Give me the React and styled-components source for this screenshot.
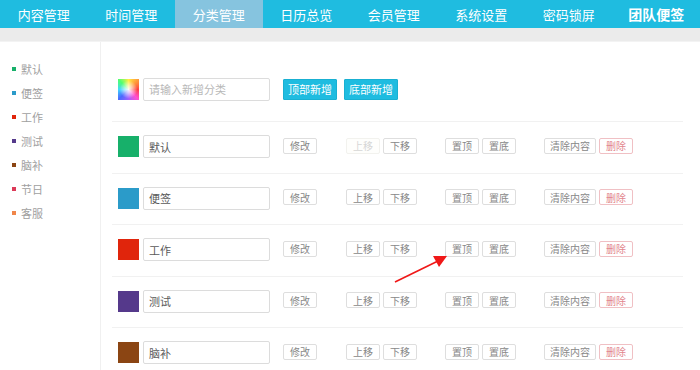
import React from "react";
import styled, { createGlobalStyle } from "styled-components";

const Global = createGlobalStyle`
  html, body { margin: 0; padding: 0; background: #fff; }
  body { font-family: "Noto Sans CJK SC", "Noto Sans", sans-serif; }
  * { box-sizing: border-box; }
`;

const Page = styled.div`
  position: relative;
  width: 700px;
  height: 370px;
  overflow: hidden;
`;

const Nav = styled.nav`
  display: flex;
  height: 28px;
  background: #1fbce0;
`;

const Tab = styled.div`
  width: 88px;
  display: flex;
  align-items: center;
  justify-content: center;
  color: #fff;
  font-size: ${(p) => (p.$bold ? "14px" : "13px")};
  font-weight: ${(p) => (p.$bold ? 700 : 400)};
  background: ${(p) => (p.$active ? "#86c4df" : "transparent")};
`;

const Band = styled.div`
  height: 14px;
  background: #ebebeb;
  border-bottom: 1px solid #f3f3f3;
`;

const Body = styled.div`
  display: flex;
`;

const Side = styled.ul`
  list-style: none;
  margin: 0;
  width: 101px;
  padding: 15px 0 0 0;
  min-height: 330px;
  border-right: 1px solid #f0f0f0;
`;

const SideItem = styled.li`
  display: flex;
  align-items: center;
  height: 24px;
  padding-left: 12px;
  font-size: 11px;
  color: #a0a0a0;
  &::before {
    content: "";
    width: 4px;
    height: 4px;
    margin-right: 5px;
    background: ${(p) => p.$color};
  }
`;

const Main = styled.div`
  flex: 1;
  padding: 20px 17px 0 11px;
`;

const AddRow = styled.div`
  display: flex;
  align-items: center;
  height: 60px;
  padding: 16px 0 21px 6px;
  border-bottom: 1px solid #f1f1f1;
`;

const Row = styled.div`
  display: flex;
  align-items: center;
  height: 51.5px;
  padding: 14px 0 15px 6px;
  border-bottom: 1px solid #f1f1f1;
`;

const Swatch = styled.div`
  width: 21px;
  height: 21px;
  flex: none;
  background: ${(p) => p.$color};
`;

const Picker = styled(Swatch)`
  background:
    radial-gradient(circle at 50% 50%, rgba(255,255,255,0.95) 0, rgba(255,255,255,0.6) 25%, rgba(255,255,255,0) 60%),
    conic-gradient(#ffee44, #ff9a3a 45deg, #ff4040 90deg, #ff50d0 135deg, #a060ff 180deg, #4a6aff 225deg, #40d8ff 270deg, #50ff70 315deg, #ffee44 360deg);
`;

const Field = styled.div`
  width: 127px;
  height: 23px;
  margin-left: 4px;
  border: 1px solid #dcdcdc;
  border-radius: 2px;
  display: flex;
  align-items: center;
  padding-left: 5px;
  font-size: 11px;
  color: ${(p) => (p.$placeholder ? "#b8b8b8" : "#5a5a5a")};
  flex: none;
`;

const Primary = styled.div`
  height: 21px;
  width: 54px;
  margin-left: ${(p) => p.$gap}px;
  background: #1fbce0;
  border: 1px solid #19b0d2;
  border-radius: 1px;
  color: #fff;
  font-size: 11px;
  display: flex;
  align-items: center;
  justify-content: center;
  flex: none;
`;

const Btn = styled.div`
  height: 16px;
  width: ${(p) => p.$w || 34}px;
  margin-left: ${(p) => p.$gap}px;
  margin-top: -2px;
  border: 1px solid ${(p) => (p.$danger ? "#f0c0c4" : p.$disabled ? "#f2f2ee" : "#dedede")};
  border-radius: 2px;
  color: ${(p) => (p.$danger ? "#e2858d" : p.$disabled ? "#d6d6d6" : "#888")};
  background: ${(p) => (p.$disabled ? "#fefefc" : "#fff")};
  font-size: 10px;
  display: flex;
  align-items: center;
  justify-content: center;
  flex: none;
`;

const Arrow = styled.svg`
  position: absolute;
  left: 390px;
  top: 250px;
  width: 60px;
  height: 36px;
  pointer-events: none;
`;

const tabs = ["内容管理", "时间管理", "分类管理", "日历总览", "会员管理", "系统设置", "密码锁屏", "团队便签"];

const cats = [
  { name: "默认", color: "#17b06a" },
  { name: "便签", color: "#2b9bc9" },
  { name: "工作", color: "#e0250c" },
  { name: "测试", color: "#55398b" },
  { name: "脑补", color: "#8b4513" },
  { name: "节日", color: "#dc3a58" },
  { name: "客服", color: "#f0864a" },
];

export default function App() {
  return (
    <Page>
      <Global />
      <Nav>
        {tabs.map((t, i) => (
          <Tab key={t} $active={i === 2} $bold={i === 7}>
            {t}
          </Tab>
        ))}
      </Nav>
      <Band />
      <Body>
        <Side>
          {cats.map((c) => (
            <SideItem key={c.name} $color={c.color}>
              {c.name}
            </SideItem>
          ))}
        </Side>
        <Main>
          <AddRow>
            <Picker />
            <Field $placeholder>请输入新增分类</Field>
            <Primary $gap={13}>顶部新增</Primary>
            <Primary $gap={7}>底部新增</Primary>
          </AddRow>
          {cats.slice(0, 5).map((c, i) => (
            <Row key={c.name}>
              <Swatch $color={c.color} />
              <Field>{c.name}</Field>
              <Btn $gap={13}>修改</Btn>
              <Btn $gap={29} $disabled={i === 0}>上移</Btn>
              <Btn $gap={3}>下移</Btn>
              <Btn $gap={28}>置顶</Btn>
              <Btn $gap={3}>置底</Btn>
              <Btn $gap={28} $w={52}>清除内容</Btn>
              <Btn $gap={3} $danger>删除</Btn>
            </Row>
          ))}
        </Main>
      </Body>
      <Arrow viewBox="0 0 60 36">
        <line x1="5" y1="32" x2="48" y2="11" stroke="#f01818" strokeWidth="1.6" />
        <polygon points="57,6 43,6 49,17" fill="#f01818" />
      </Arrow>
    </Page>
  );
}
